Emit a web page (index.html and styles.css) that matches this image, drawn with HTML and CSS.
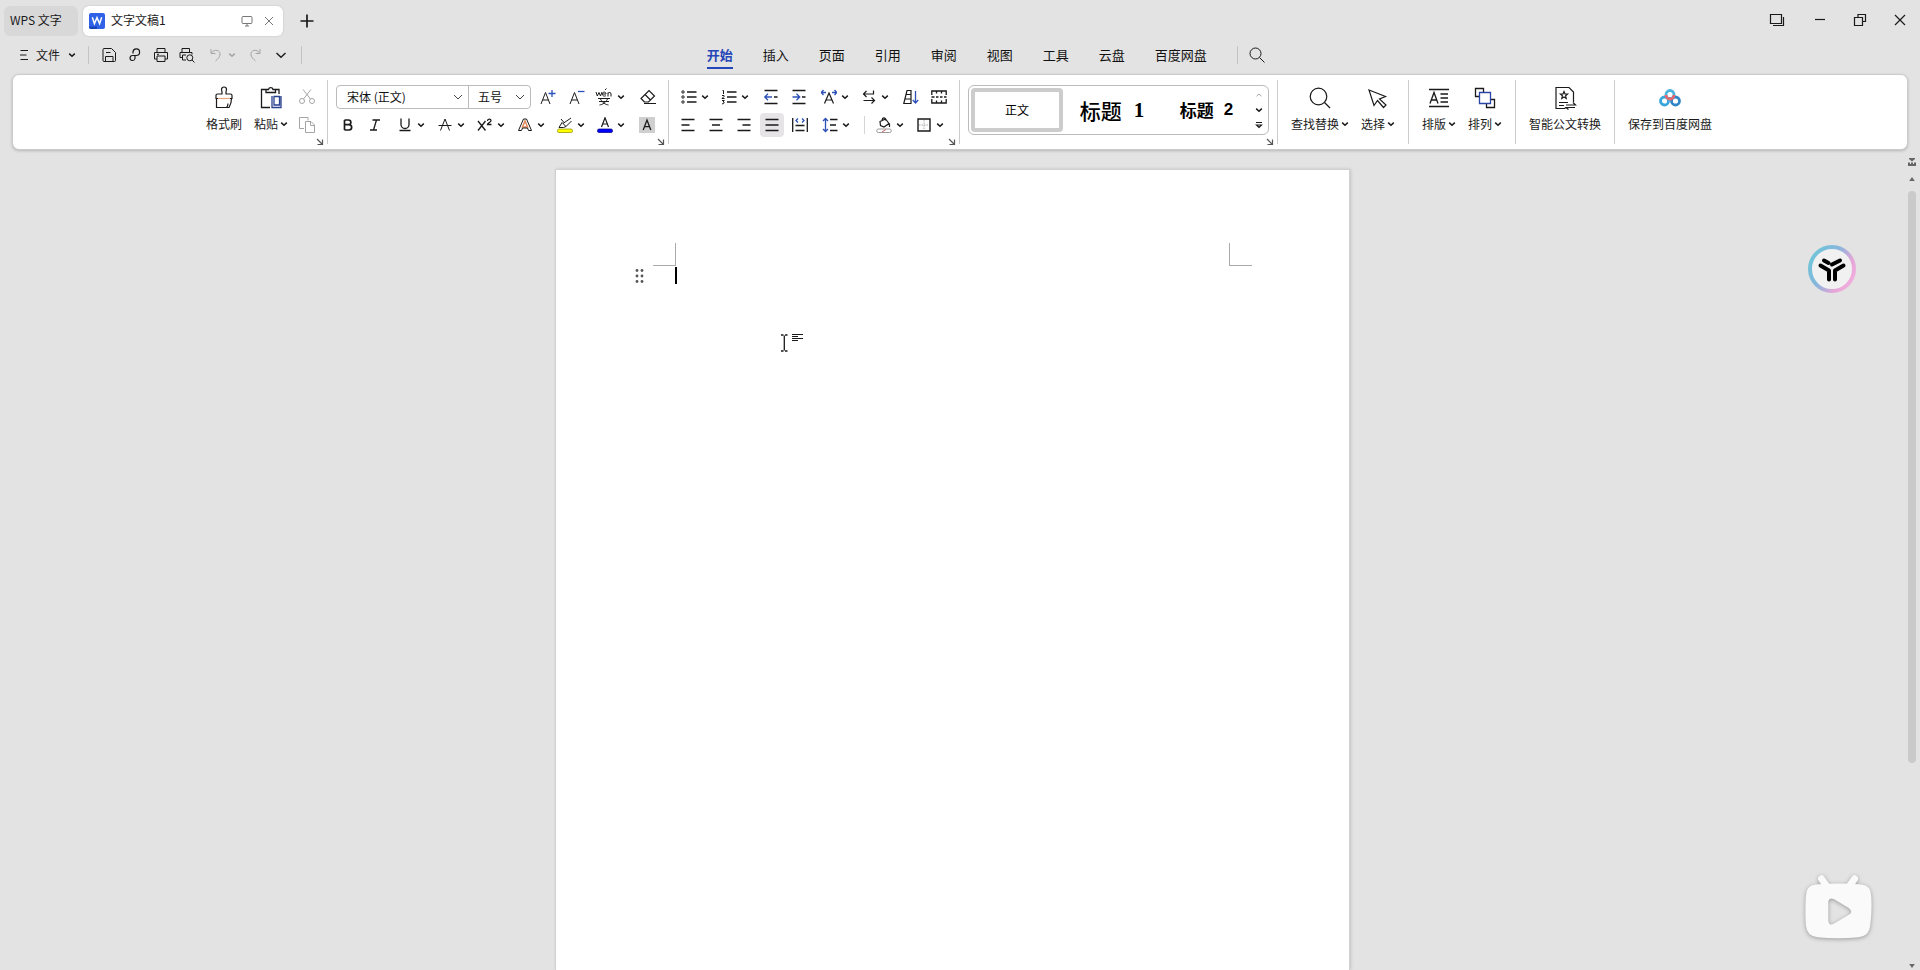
FILE: index.html
```html
<!DOCTYPE html>
<html lang="zh-CN">
<head>
<meta charset="utf-8">
<title>文字文稿1 - WPS 文字</title>
<link rel="stylesheet" href="styles.css">
</head>
<body>
<svg class="defs" aria-hidden="true">
  <symbol id="chev" viewBox="0 0 8 8"><path d="M1.2 2.6 4 5.2l2.8-2.6" fill="none" stroke="currentColor" stroke-width="1.5"/></symbol>
  <symbol id="launch" viewBox="0 0 8 8"><path d="M1 1l5 5M6.5 1.5v5h-5" fill="none" stroke="currentColor" stroke-width="1.2"/></symbol>
</svg>

<header class="titlebar">
  <div class="tabs">
    <button class="tab tab-home">WPS 文字</button>
    <div class="tab tab-active">
      <svg class="ic16" viewBox="0 0 16 16"><rect width="16" height="16" rx="2" fill="#2f62e6"/><path d="M0 13.5h8V16H2a2 2 0 0 1-2-2z" fill="#1a44b8"/><path d="M3.3 4.3 5.4 10.6 8 4.6l2.6 6 2.1-6.3" fill="none" stroke="#fff" stroke-width="1.5"/></svg>
      <span class="tab-name">文字文稿1</span>
      <button class="tab-btn" aria-label="窗口"><svg class="ic12" viewBox="0 0 12 12"><path d="M2 1.5h8a1 1 0 0 1 1 1v5a1 1 0 0 1-1 1H2a1 1 0 0 1-1-1v-5a1 1 0 0 1 1-1zM6 8.500v2.500M4 11h4"/></svg></button>
      <button class="tab-btn" aria-label="关闭"><svg class="ic12" viewBox="0 0 12 12"><path d="M2 2l8 8M10 2l-8 8"/></svg></button>
    </div>
    <button class="add" aria-label="新建"><svg class="ic16" viewBox="0 0 16 16"><path d="M8 1.500v13M1.500 8h13" stroke-width="1.700"/></svg></button>
  </div>
  <div class="window-btns">
    <button aria-label="工作区"><svg class="ic16" viewBox="0 0 16 16"><path d="M1.500 2.500h11v9h-11zM14.500 5v8.500H4" stroke-width="1.200"/></svg></button>
    <button aria-label="最小化"><svg class="ic16" viewBox="0 0 16 16"><path d="M3 7.500h10" stroke-width="1.200"/></svg></button>
    <button aria-label="还原"><svg class="ic16" viewBox="0 0 16 16"><path d="M2.500 5.500h8v8h-8zM6 5.500v-3h7.500v7H10.500" stroke-width="1.200"/></svg></button>
    <button aria-label="关闭"><svg class="ic16" viewBox="0 0 16 16"><path d="M3 3l10 10M13 3L3 13" stroke-width="1.200"/></svg></button>
  </div>
</header>

<div class="menubar">
  <div class="quick">
    <button class="file-btn"><svg class="ic12" viewBox="0 0 12 12"><path d="M2.500 1.500H10M2 6h6.500M2.500 10.500H10"/></svg>文件<svg class="chev"><use href="#chev"/></svg></button>
    <i class="vline first-line"></i>
    <button class="qb" aria-label="保存"><svg class="ic16" viewBox="0 0 16 16"><path d="M3 1.500h7.500L14.500 5.500v8a1 1 0 0 1-1 1h-10.500a1 1 0 0 1-1-1v-11a1 1 0 0 1 1-1zM4.500 14.500v-5h7.500v5M5 5.500h4.500"/></svg></button>
    <button class="qb" aria-label="输出为PDF"><svg class="ic16" viewBox="0 0 16 16"><path d="M6 6.500V5a3.300 3.300 0 1 1 3.300 3.500H5.500a2.500 2.500 0 1 0 2.500 3V8.500" stroke-width="1.200"/></svg></button>
    <button class="qb" aria-label="打印"><svg class="ic16" viewBox="0 0 16 16"><path d="M4 5V1.500h8V5M4 12H1.500V5.500h13V12H12M4 9h8v5.500H4zM4 7.300h2"/></svg></button>
    <button class="qb" aria-label="打印预览"><svg class="ic16" viewBox="0 0 16 16"><path d="M3 5V1.500h7.500V5M3 10.500H1V5.500h12v2M7 8H3.500v5H7M13 13l2.500 2.500"/><circle cx="10.800" cy="10.800" r="3"/></svg></button>
    <button class="qb off undo" aria-label="撤销"><svg class="ic16" viewBox="0 0 16 16"><path d="M3 2v4.500h4.500M3.500 6C6 1.500 13 3 12 8c-.5 2.500-2.500 4-4.500 6"/></svg><svg class="chev"><use href="#chev"/></svg></button>
    <button class="qb off" aria-label="恢复"><svg class="ic16" viewBox="0 0 16 16"><path d="M13 2v4.500H8.500M12.500 6C10 1.500 3 3 4 8c.5 2.500 2.500 4 4.500 6"/></svg></button>
    <button class="qb" aria-label="更多"><svg class="ic12" viewBox="0 0 12 12"><path d="M1.500 4 6 8.300 10.500 4" stroke-width="1.400"/></svg></button>
    <i class="vline"></i>
  </div>
  <div class="space-l"></div>
  <nav class="menu">
    <a href="#" class="on">开始</a><a href="#">插入</a><a href="#">页面</a><a href="#">引用</a><a href="#">审阅</a><a href="#">视图</a><a href="#">工具</a><a href="#">云盘</a><a href="#">百度网盘</a>
    <i class="vline"></i>
  </nav>
  <button class="search" aria-label="搜索"><svg class="ic16" viewBox="0 0 16 16"><circle cx="6.500" cy="6.500" r="5.500"/><path d="M10.500 10.500l5 5"/></svg></button>
  <div class="space-r"></div>
</div>

<section class="ribbon">
  <div class="group clip">
    <button class="big"><svg class="ic24" viewBox="0 0 24 24"><path d="M10 8V6L9.500 3.500a2.500 2.500 0 0 1 5 0L14 6v2h4.500A1.500 1.500 0 0 1 20 9.500v3H4v-3A1.500 1.500 0 0 1 5.500 8zM4.500 12.500V21.500h12.500q2.500-4 2.500-9M14.500 21.500q1.500-1.500 1.500-4"/><path d="M6 12.500h12" stroke="#e9a77c"/></svg><span>格式刷</span></button>
    <button class="big"><svg class="ic24" viewBox="0 0 24 24"><path d="M7 3.500H2.500v18H11M16 3.500h4V8M7 6.500V3.500h2.500a2.300 2.300 0 0 1 4.500 0h2.500v3z" stroke-width="1.300"/><path d="M13 10v11.500h9V10M15 10.500h5.500v8.500H15z" stroke="#27408f" stroke-width="1.300"/></svg><span>粘贴<svg class="chev"><use href="#chev"/></svg></span></button>
    <div class="stack">
      <button class="tb off" aria-label="剪切"><svg class="ic16" viewBox="0 0 16 16"><circle cx="3" cy="12" r="2.500"/><circle cx="13" cy="12" r="2.500"/><path d="M4.500 10 12 .5M11.500 10 4 .5"/></svg></button>
      <button class="tb off" aria-label="复制"><svg class="ic16" viewBox="0 0 16 16"><path d="M5 11.500H.5V.5H9v3M6.500 4.500H12l3.500 3.500v7.500h-9zM11.500 4.500V8.500h4"/></svg></button>
    </div>
    <button class="launch" aria-label="剪贴板设置"><svg class="chev"><use href="#launch"/></svg></button>
  </div>

  <div class="group font-group">
    <div class="row">
      <div class="combo">
        <label class="pick family"><select aria-label="字体"><option>宋体 (正文)</option></select><svg class="ic12" viewBox="0 0 12 12"><path d="M2 4l4 4 4-4"/></svg></label>
        <label class="pick size"><select aria-label="字号"><option>五号</option></select><svg class="ic12" viewBox="0 0 12 12"><path d="M2 4l4 4 4-4"/></svg></label>
      </div>
      <button class="tb" aria-label="增大字号"><svg class="ic16" viewBox="0 0 16 16"><path d="M1 15 5.500 3.500 10 15M2.500 11h6"/><path class="blue" d="M12 1v7M8.500 4.500h7"/></svg></button>
      <button class="tb" aria-label="减小字号"><svg class="ic16" viewBox="0 0 16 16"><path d="M1 15 5.500 3.500 10 15M2.500 11h6"/><path class="blue" d="M9 2.500h6.500"/></svg></button>
      <button class="tb drop" aria-label="拼音指南"><svg class="ic18" viewBox="0 0 18 18"><path d="M1 4l1.300 4L4 4.500 5.500 8 7 4M7.500 6h3.500c0-2.500-3.500-2.500-3.500 0 0 2.500 2.500 2.500 3.500 1.500M10 2l1.500-1.500M13 8.500V4.500M13 5.500c1-1.500 3-1.500 3 .5v2.500M3 10.500h12M5.500 11c2 4 5 5.500 8 6M12.500 11c-2 4-5 5.500-8 6M4 13.500h10"/></svg><svg class="chev"><use href="#chev"/></svg></button>
      <button class="tb eraser" aria-label="清除格式"><svg class="ic16" viewBox="0 0 16 16"><path d="M4.500 13 1 9.500 9 1.500 14.500 7 8.500 13zM5 5.500l5.500 5.500M4 14.500h12" stroke-width="1.200"/></svg></button>
    </div>
    <div class="row wide">
      <div class="sub">
        <button class="tb" aria-label="加粗"><svg class="ic16" viewBox="0 0 16 16"><path d="M4.500 3v10M4.500 3H8.500a2.300 2.300 0 0 1 0 4.700H4.500M4.500 7.700H9a2.600 2.600 0 0 1 0 5.300H4.500" stroke-width="1.700"/></svg></button>
        <button class="tb" aria-label="倾斜"><svg class="ic16" viewBox="0 0 16 16"><path d="M5.500 3H13M3 13h7M9.500 3l-3 10" stroke-width="1.300"/></svg></button>
      </div>
      <button class="tb drop" aria-label="下划线"><svg class="ic16" viewBox="0 0 16 16"><path d="M4 1.500v6a4 4 0 0 0 8 0v-6M2.500 13.500h11" stroke-width="1.300"/></svg><svg class="chev"><use href="#chev"/></svg></button>
      <button class="tb drop" aria-label="删除线"><svg class="ic16" viewBox="0 0 16 16"><path d="M3.500 13.500 8 2l4.500 11.500M1.500 8.500h13"/></svg><svg class="chev"><use href="#chev"/></svg></button>
      <button class="tb drop" aria-label="上标"><svg class="ic16" viewBox="0 0 16 16"><path d="M1 4l7.500 9.500M8.500 4 1 13.500M10.500 4c0-2.500 3.500-2.500 3.500-.3C14 5 10.500 6 10.500 7.500h4" stroke-width="1.300"/></svg><svg class="chev"><use href="#chev"/></svg></button>
      <button class="tb drop" aria-label="文字效果"><svg class="ic16" viewBox="0 0 16 16"><path d="M5.500 10 8 4l2.500 6z" stroke="#e08a5a" stroke-width="1.500"/><path d="M1.500 13.500 6.500 2h3l5 11.500H11.500l-1-2.500h-5l-1 2.500z"/></svg><svg class="chev"><use href="#chev"/></svg></button>
      <button class="tb drop" aria-label="突出显示"><svg class="ic16" viewBox="0 0 16 16"><path d="M2 10.500 5 5.500l4 4-2.500 1zM6 6.500 14 1M9 9.500l5.500-5.500M4 2l3 3.500"/><rect x=".5" y="12" width="15" height="3.500" rx="1.500" fill="#ff0" stroke="#8d8d00" stroke-width=".7"/></svg><svg class="chev"><use href="#chev"/></svg></button>
      <button class="tb drop" aria-label="字体颜色"><svg class="ic16" viewBox="0 0 16 16"><path d="M4.500 10 8 .8 11.500 10M5.500 7h5" stroke-width="1.200"/><rect x=".5" y="12" width="15" height="3.500" rx="1.500" fill="#00f" stroke="#000080" stroke-width=".7"/></svg><svg class="chev"><use href="#chev"/></svg></button>
      <button class="tb" aria-label="字符底纹"><svg class="ic16" viewBox="0 0 16 16"><path d="M0 0h16v16H0z" fill="#cfcfcf" stroke="none"/><path d="M4.200 13 8 3l3.800 10M5.500 9.700h5" stroke-width="1.300"/></svg></button>
    </div>
    <button class="launch" aria-label="字体设置"><svg class="chev"><use href="#launch"/></svg></button>
  </div>

  <div class="group para-group">
    <div class="row wide indent">
      <button class="tb drop" aria-label="项目符号"><svg class="ic16" viewBox="0 0 16 16"><path d="M6 3h9.500M6 8h9.500M6 13h9.500" stroke-width="1.300"/><circle cx="2" cy="3" r="1.200"/><circle cx="2" cy="8" r="1.200"/><circle cx="2" cy="13" r="1.200"/></svg><svg class="chev"><use href="#chev"/></svg></button>
      <button class="tb drop" aria-label="编号"><svg class="ic16" viewBox="0 0 16 16"><path d="M6 3h9.500M6 8h9.500M6 13h9.500" stroke-width="1.300"/><path d="M1.500 1.500h1V5M1 6.500h2v1L1 9.500h2.500M1 11.500h2.300L2 13c2 0 1.500 2-1 1.800"/></svg><svg class="chev"><use href="#chev"/></svg></button>
      <div class="sub s4">
        <button class="tb" aria-label="减少缩进"><svg class="ic16" viewBox="0 0 16 16"><path d="M1.500 1.500h13M11 8h3.500M1.500 14.500h13" stroke-width="1.300"/><path class="blue" d="M9 8H2M5 4.800 1.800 8 5 11.200"/></svg></button>
        <button class="tb" aria-label="增加缩进"><svg class="ic16" viewBox="0 0 16 16"><path d="M1.500 1.500h13M11 8h3.500M1.500 14.500h13" stroke-width="1.300"/><path class="blue" d="M1.500 8h7M5.500 4.800 8.700 8l-3.200 3.200"/></svg></button>
      </div>
      <button class="tb drop" aria-label="中文版式"><svg class="ic16" viewBox="0 0 16 16"><path d="M3.500 14.500 8 4l4.500 10.500M5 11h6" stroke-width="1.200"/><path class="blue" d="M.5 3.500H5M2.500 1 .3 3.500 2.500 6M15.500 3.500H11M13.500 1l2.200 2.500L13.500 6"/></svg><svg class="chev"><use href="#chev"/></svg></button>
      <button class="tb drop" aria-label="文字方向"><svg class="ic16" viewBox="0 0 16 16"><path d="M12.500 1.500V5H3M5.500 2 2.500 5l3 3M2.500 11.500h10.500M10.500 8.500l3 3-3 3" stroke-width="1.200"/></svg><svg class="chev"><use href="#chev"/></svg></button>
      <div class="sub s4">
        <button class="tb" aria-label="排序"><svg class="ic16" viewBox="0 0 16 16"><path d="M4 1.500h4v13H.8zM3.200 5.500H8M2.300 10H8" stroke-width="1.200"/><path class="blue" d="M12.500 2v12M9.800 11l2.700 3 2.700-3"/></svg></button>
        <button class="tb" aria-label="显示编辑标记"><svg class="ic16" viewBox="0 0 16 16"><path d="M.8 6V2h14.400v4M.8 10v4h14.400v-4M.5 8h3M5 8h2.500M9 8h2.500M13 8h2.500M5.500 2v2.500M10.500 2v2.500M5.500 14v-2.500M10.500 14v-2.500" stroke-width="1.300"/></svg></button>
      </div>
    </div>
    <div class="row wide">
      <div class="sub s4">
        <button class="tb" aria-label="左对齐"><svg class="ic16" viewBox="0 0 16 16"><path d="M1.500 2.500h13M1.500 8h8M1.500 13.500h13" stroke-width="1.300"/></svg></button>
        <button class="tb" aria-label="居中"><svg class="ic16" viewBox="0 0 16 16"><path d="M1.500 2.500h13M4 8h8M1.500 13.500h13" stroke-width="1.300"/></svg></button>
        <button class="tb" aria-label="右对齐"><svg class="ic16" viewBox="0 0 16 16"><path d="M1.500 2.500h13M6.500 8h8M1.500 13.500h13" stroke-width="1.300"/></svg></button>
        <button class="tb pressed" aria-label="两端对齐"><svg class="ic16" viewBox="0 0 16 16"><path d="M1.500 2.500h13M1.500 8h13M1.500 13.500h13" stroke-width="1.300"/></svg></button>
        <button class="tb" aria-label="分散对齐"><svg class="ic16" viewBox="0 0 16 16"><path d="M.7 1v14M15.300 1v14M3.500 8.500h9M3.500 13.500h9" stroke-width="1.300"/><path class="blue" d="M6 1.500 4 3.500l2 2M10 1.500l2 2-2 2"/></svg></button>
      </div>
      <button class="tb drop" aria-label="行距"><svg class="ic16" viewBox="0 0 16 16"><path d="M8 2.500h7.500M8 8h6M8 13.500h7.500" stroke-width="1.300"/><path class="blue" d="M3.500 1.500v13M1 4l2.500-2.500L6 4M1 12l2.500 2.500L6 12"/></svg><svg class="chev"><use href="#chev"/></svg></button>
      <i class="vline soft"></i>
      <button class="tb drop" aria-label="底纹颜色"><svg class="ic16" viewBox="0 0 16 16"><path d="M4 4.500 9.500 2l3.500 4.500-5 3.500-3.500-1.500zM6 3.500C6.500 0 9.500 0 9.500 3.500M13.500 6.500v3.500" stroke-width="1.200"/><rect x=".8" y="12" width="14.400" height="3.500" rx="1.500" stroke="#999"/><path d="M6 15l4-2.500" stroke="#c66"/></svg><svg class="chev"><use href="#chev"/></svg></button>
      <button class="tb drop" aria-label="边框"><svg class="ic16" viewBox="0 0 16 16"><path d="M2 2h12v12H2z" stroke-width="1.400"/><path d="M8 3v10M3 8h10" stroke="#aaa" stroke-dasharray="1.500 1"/></svg><svg class="chev"><use href="#chev"/></svg></button>
    </div>
    <button class="launch" aria-label="段落设置"><svg class="chev"><use href="#launch"/></svg></button>
  </div>

  <div class="group style-group">
    <div class="gallery">
      <button class="style chosen">正文</button>
      <button class="style h1">标题<b>1</b></button>
      <button class="style h2">标题<b>2</b></button>
      <div class="gal-nav">
        <button class="off" aria-label="上一行"><svg class="chev" viewBox="0 0 8 8"><path d="M1.500 5.200 4 3l2.500 2.200"/></svg></button>
        <button aria-label="下一行"><svg class="chev"><use href="#chev"/></svg></button>
        <button aria-label="展开"><svg class="chev" viewBox="0 0 8 8"><path d="M1 1.500h6M1.500 4h5L4 6.500z" stroke-width="1.200"/></svg></button>
      </div>
    </div>
    <button class="launch" aria-label="样式设置"><svg class="chev"><use href="#launch"/></svg></button>
  </div>

  <div class="group">
    <button class="big"><svg class="ic24" viewBox="0 0 24 24"><circle cx="10.500" cy="10.500" r="8.300"/><path d="M16.500 16.500 22 22"/></svg><span>查找替换<svg class="chev"><use href="#chev"/></svg></span></button>
    <button class="big"><svg class="ic24" viewBox="0 0 24 24"><path d="M3 4l16.500 6.500-6 2.500 6.500 6-2.500 2.500-6-7L8 19.500z"/></svg><span>选择<svg class="chev"><use href="#chev"/></svg></span></button>
  </div>
  <div class="group">
    <button class="big"><svg class="ic24" viewBox="0 0 24 24"><path d="M2 3.500h20M2 20.500h20M13.500 8H21M13.500 12H21M13.500 16H21M3 17.500 7 6.500l4 11M4.500 14h5" stroke-width="1.300"/></svg><span>排版<svg class="chev"><use href="#chev"/></svg></span></button>
    <button class="big"><svg class="ic24" viewBox="0 0 24 24"><path d="M6 10.500H2.500v-8h8V6M18 13.500h3.500v8h-8V18" stroke-width="1.300"/><path d="M6.500 6.500h11v11h-11z" stroke="#2a45a5" stroke-width="1.300"/></svg><span>排列<svg class="chev"><use href="#chev"/></svg></span></button>
  </div>
  <div class="group">
    <button class="big"><svg class="ic24" viewBox="0 0 24 24"><path d="M12.500 22.500H3v-21h13l4.500 4.500v10M6 16.500h9M6 19.500h5M13 19h9.500l-2.500-2.500M22 21.500h-9l2.500 2" stroke-width="1.200"/><path d="M11 5.500l1 2.400 2.600.2-2 1.700.6 2.600L11 11l-2.200 1.400.6-2.600-2-1.700 2.600-.2z" stroke-width="1.200"/></svg><span>智能公文转换</span></button>
  </div>
  <div class="group last">
    <button class="big"><svg class="ic24" viewBox="0 0 24 24"><circle cx="6.500" cy="15" r="4" stroke="#37a6dc" stroke-width="2.800"/><circle cx="17.500" cy="15" r="4" stroke="#2f86c6" stroke-width="2.800"/><circle cx="12" cy="8.500" r="4" stroke="#49b3dc" stroke-width="2.800"/><path d="M8 9a4 4 0 0 0 8 0" stroke="#e8666c" stroke-width="2.800"/></svg><span>保存到百度网盘</span></button>
  </div>
</section>

<main class="workspace">
  <div class="canvas">
    <article class="sheet">
      <div class="margins"><i class="corner left"></i><i class="corner right"></i></div>
      <div class="line">
        <svg class="grip" viewBox="0 0 10 16"><g fill="#555"><circle cx="2" cy="2.500" r="1.400"/><circle cx="7" cy="2.500" r="1.400"/><circle cx="2" cy="8" r="1.400"/><circle cx="7" cy="8" r="1.400"/><circle cx="2" cy="13.500" r="1.400"/><circle cx="7" cy="13.500" r="1.400"/></g></svg>
        <i class="caret"></i>
      </div>
      <svg class="pointer" viewBox="0 0 24 20"><path d="M1 2h2.500M5 2h2.500M1 18h2.500M5 18h2.500M4.300 2.500v15" stroke-width="1.300"/><path d="M12 1.500h11M12 3.500h6M12 5.500h11M12 7.500h6"/></svg>
    </article>
  </div>
  <div class="scroll">
    <svg class="split" viewBox="0 0 8 8"><path d="M1 0h6v1L4 3.500 1 1zM0 4.500h2V6h1V4.500h2V6h1V4.500h2V8H0z"/></svg>
    <svg class="arrow" viewBox="0 0 8 8"><path d="M4 2l2.800 4H1.200z"/></svg>
    <div class="track"><div class="thumb"></div></div>
    <svg class="arrow" viewBox="0 0 8 8"><path d="M4 6l2.800-4H1.200z"/></svg>
  </div>
</main>

<button class="assistant" aria-label="助手"><svg viewBox="0 0 48 48">
  <defs><linearGradient id="ring" x1="0" y1=".2" x2="1" y2=".8"><stop offset="0" stop-color="#6fc5d8"/><stop offset=".4" stop-color="#86b6dc"/><stop offset=".75" stop-color="#e5a6d8"/><stop offset="1" stop-color="#f3aede"/></linearGradient></defs>
  <circle cx="24" cy="24" r="22" fill="#f1f1f1" stroke="url(#ring)" stroke-width="4"/>
  <path d="M16 15.500l4.500 2.500M24 19.500l8-4M12.500 20.500l8.500 5v9M35.500 20.500l-8.500 5v9" fill="none" stroke="#000" stroke-width="4" stroke-linecap="round" stroke-linejoin="round"/></svg></button>
<svg class="tv" viewBox="0 0 80 80"><path d="M21 11l7 10M48 21l7-10" stroke="#fafafa" stroke-width="7" stroke-linecap="round"/><path fill="#fafafa" fill-rule="evenodd" d="M15 17Q38 15 62 17 72 18 72 29 73 44 71 59 70 70 59 71 38 73 17 71 6 70 5 59 4 44 5 29 5 18 15 17zM28 34v20q1 6 6 3l15-9q5-3 0-7L34 32q-5-2-6 2z"/></svg>
</body>
</html>
```
FILE: styles.css
```css
* { box-sizing: border-box; }
body {
  margin: 0;
  min-height: 100vh;
  display: flex;
  flex-direction: column;
  background: #e3e3e3;
  color: #1a1a1a;
  font: 12px/16px "Noto Sans CJK SC", "Noto Sans", sans-serif;
  overflow: hidden;
}
button {
  display: flex;
  align-items: center;
  justify-content: center;
  margin: 0;
  padding: 0;
  border: 0;
  background: none;
  color: inherit;
  font: inherit;
  white-space: nowrap;
}
svg { flex: none; fill: none; stroke: currentColor; }
.defs { display: none; }
.chev { width: 8px; height: 8px; }
.ic12 { width: 12px; height: 12px; }
.ic16 { width: 16px; height: 16px; }
.ic18 { width: 18px; height: 18px; }
.ic24 { width: 24px; height: 24px; }
.blue { stroke: #2b50b8; stroke-width: 1.3; }
.off { color: #a5a5a5; }
.vline { width: 1px; height: 18px; background: #c4c4c4; }

/* Title bar */
.titlebar {
  display: flex;
  justify-content: space-between;
  height: 38px;
  padding: 6px 0 2px 4px;
}
.tabs { display: flex; gap: 5px; }
.tab { display: flex; align-items: center; height: 30px; padding: 0 5px 2px 6px; border-radius: 6px; }
.tab-home { justify-content: flex-start; width: 74px; background: #d8d8d8; }
.tab-active {
  width: 200px;
  padding-bottom: 0;
  background: #fff;
  box-shadow: 0 0 2px #bbb;
}
.tab-active > .ic16 { stroke: none; }
.tab-name { flex: 1; margin-left: 6px; padding-bottom: 2px; }
.tab-btn { width: 18px; height: 18px; margin-left: 4px; color: #777; }
.add { width: 38px; height: 30px; }
.window-btns { display: flex; align-items: flex-start; }
.window-btns button { width: 40px; height: 28px; }
.window-btns button:first-child { margin-right: 3px; }

/* Menu row */
.menubar { display: flex; align-items: center; height: 36px; padding-bottom: 2px; }
.quick { display: flex; align-items: center; padding-left: 18px; }
.quick .vline { margin-left: 7px; }
.file-btn { gap: 6px; }
.file-btn .chev { margin-left: 2px; }
.quick .first-line { margin: 0 7px 0 12px; }
.qb { width: 26px; height: 26px; }
.qb.undo { width: 40px; gap: 4px; margin-left: 2px; }
.space-l { flex: 404; }
.space-r { flex: 654; }
.menu { display: flex; align-items: center; gap: 30px; font-size: 13px; }
.menu a {
  padding: 4px 0 3px;
  border-bottom: 2px solid transparent;
  color: #111;
  line-height: 18px;
  text-decoration: none;
}
.menu a.on { border-color: #2446b8; color: #2446b8; font-weight: 700; }
.search { margin-left: 11px; }

/* Ribbon */
.ribbon {
  display: flex;
  height: 76px;
  margin: 0 12px;
  padding: 5px 0;
  background: #fff;
  border: 1px solid #cbcbcb;
  border-radius: 7px;
  box-shadow: 0 1px 3px #b5b5b5;
}
.group {
  position: relative;
  display: flex;
  gap: 12px;
  padding: 0 13px;
  border-right: 1px solid #ccc;
}
.group.last { border: 0; }
.group.clip { padding-left: 193px; padding-right: 8px; }
.big { flex-direction: column; justify-content: flex-start; gap: 6px; padding-top: 6px; }
.big span { display: flex; align-items: center; gap: 2px; }
.big .ic24 { stroke-width: 1.2; }
.stack { display: flex; flex-direction: column; gap: 4px; padding-top: 5px; margin-left: -5px; }
.launch { position: absolute; right: 3px; bottom: -2px; color: #555; }
.font-group, .para-group { flex-direction: column; gap: 4px; padding: 5px 8px 0; }
.group.para-group { padding-left: 7px; }
.row { display: flex; align-items: center; gap: 5px; height: 24px; }
.row.wide { gap: 8px; }
.row.indent { padding-left: 3px; }
.sub { display: flex; gap: 3px; }
.sub.s4 { gap: 4px; }
.tb { width: 24px; height: 24px; border-radius: 4px; }
.tb.drop { width: 32px; gap: 4px; }
.eraser { margin-left: 5px; }
.pressed { background: #e6e4e6; }
.vline.soft { margin: 0 1px 0 4px; background: #d5d5d5; }

.combo { display: flex; height: 24px; border: 1px solid #bbb; border-radius: 4px; }
.pick { display: flex; align-items: center; padding-right: 4px; color: #444; }
.pick + .pick { border-left: 1px solid #bbb; }
.pick select {
  flex: 1;
  min-width: 0;
  padding: 0;
  border: 0;
  appearance: none;
  background: none;
  color: #111;
  font: inherit;
}
.family { width: 131px; padding-left: 10px; }
.size { width: 62px; padding-left: 9px; }

/* Style gallery */
.style-group { padding: 5px 8px 4px; }
.gallery {
  display: flex;
  width: 301px;
  height: 50px;
  padding: 2px;
  border: 1px solid #bbb;
  border-radius: 6px;
}
.style { width: 92px; color: #000; }
.style.chosen { border: 4px solid #ccc; border-radius: 4px; }
.style.h1 { width: 98px; font-size: 21px; font-weight: 500; gap: 12px; }
.style.h1 b { font-family: "Liberation Serif", serif; }
.style.h2 { flex: 1; font-size: 17px; font-weight: 700; gap: 10px; }
.style.h2 b { font-family: "Liberation Sans", sans-serif; }
.gal-nav { display: flex; flex-direction: column; justify-content: space-around; width: 14px; }

/* Document area */
.workspace { flex: 1; display: flex; padding-top: 5px; }
.canvas { flex: 1; display: flex; justify-content: center; padding-top: 14px; }
.sheet {
  position: relative;
  width: 795px;
  padding: 73px 97px 0;
  background: #fff;
  border: 1px solid #d0d0d0;
  border-bottom: 0;
  box-shadow: 1px 0 3px #c4c4c4;
}
.margins { display: flex; justify-content: space-between; }
.corner { width: 23px; height: 23px; border: 0 solid #aaa; border-bottom-width: 1px; }
.corner.left { border-right-width: 1px; }
.corner.right { border-left-width: 1px; }
.line { display: flex; align-items: center; margin: 1px 0 0 -18px; }
.grip { width: 10px; height: 16px; stroke: none; }
.caret { width: 2px; height: 17px; margin-left: 30px; background: #000; }
.pointer { position: absolute; left: 224px; top: 163px; width: 24px; height: 20px; }
.scroll { display: flex; flex-direction: column; align-items: center; width: 15px; padding-right: 1px; }
.scroll svg { width: 8px; height: 8px; fill: #666; stroke: none; }
.scroll .split { margin: 3px 0 9px; }
.track { flex: 1; width: 8px; margin: 8px 0; }
.thumb { height: 75%; background: #cacaca; border-radius: 4px; }

.assistant { position: absolute; right: 64px; top: 245px; }
.assistant svg { width: 48px; height: 48px; stroke: none; }
.tv {
  position: absolute;
  right: 41px;
  bottom: 24px;
  width: 78px;
  height: 78px;
  stroke: none;
  filter: drop-shadow(0 1px 2px #999);
}
```
